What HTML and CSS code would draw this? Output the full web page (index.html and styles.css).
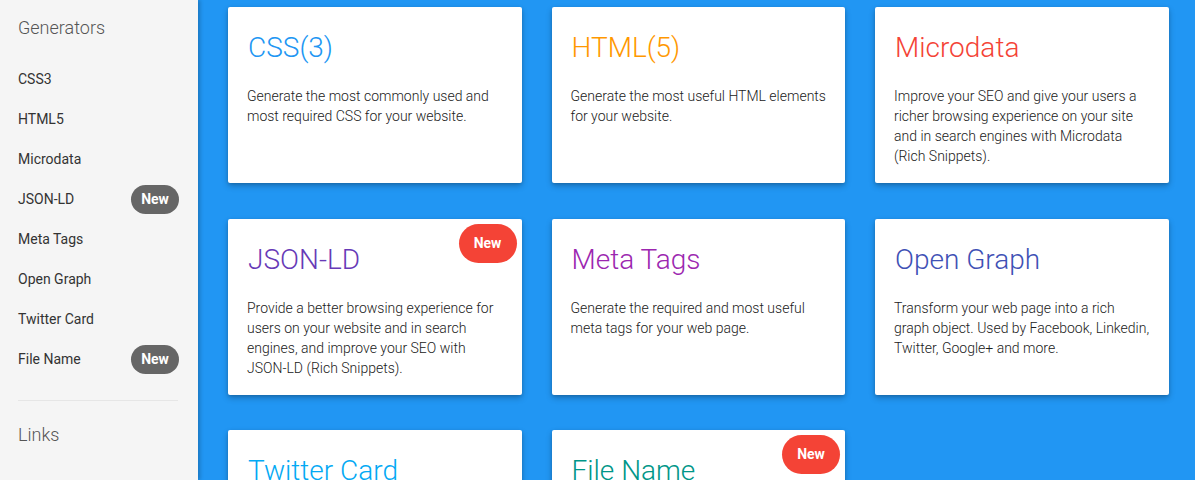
FILE: index.html
```html
<!DOCTYPE html>
<html lang="en">
<head>
<meta charset="utf-8">
<title>Generators</title>
<link rel="stylesheet" href="styles.css">
</head>
<body>
<div class="layout">
  <aside class="sidebar">
    <h2 class="side-heading">Generators</h2>
    <ul class="side-list">
      <li class="side-item"><span>CSS3</span></li>
      <li class="side-item"><span>HTML5</span></li>
      <li class="side-item"><span>Microdata</span></li>
      <li class="side-item"><span>JSON-LD</span><span class="side-badge">New</span></li>
      <li class="side-item"><span>Meta Tags</span></li>
      <li class="side-item"><span>Open Graph</span></li>
      <li class="side-item"><span>Twitter Card</span></li>
      <li class="side-item"><span>File Name</span><span class="side-badge">New</span></li>
    </ul>
    <hr class="side-divider">
    <h2 class="side-heading links">Links</h2>
  </aside>
  <main class="main">
    <div class="grid">
      <div class="card">
        <h3 class="card-title t-blue">CSS(3)</h3>
        <p class="card-text">Generate the most commonly used and<br>most required CSS for your website.</p>
      </div>
      <div class="card">
        <h3 class="card-title t-orange">HTML(5)</h3>
        <p class="card-text">Generate the most useful HTML elements<br>for your website.</p>
      </div>
      <div class="card">
        <h3 class="card-title t-red">Microdata</h3>
        <p class="card-text">Improve your SEO and give your users a<br>richer browsing experience on your site<br>and in search engines with Microdata<br>(Rich Snippets).</p>
      </div>
      <div class="card">
        <span class="card-badge">New</span>
        <h3 class="card-title t-deeppurple">JSON-LD</h3>
        <p class="card-text">Provide a better browsing experience for<br>users on your website and in search<br>engines, and improve your SEO with<br>JSON-LD (Rich Snippets).</p>
      </div>
      <div class="card">
        <h3 class="card-title t-purple">Meta Tags</h3>
        <p class="card-text">Generate the required and most useful<br>meta tags for your web page.</p>
      </div>
      <div class="card">
        <h3 class="card-title t-indigo">Open Graph</h3>
        <p class="card-text">Transform your web page into a rich<br>graph object. Used by Facebook, Linkedin,<br>Twitter, Google+ and more.</p>
      </div>
      <div class="card">
        <h3 class="card-title t-lightblue">Twitter Card</h3>
        <p class="card-text">Generate the required meta tags for<br>Twitter Cards.</p>
      </div>
      <div class="card">
        <span class="card-badge">New</span>
        <h3 class="card-title t-teal">File Name</h3>
        <p class="card-text">Generate a clean file name.</p>
      </div>
    </div>
  </main>
</div>
</body>
</html>
```
FILE: styles.css
```css
html, body {
  margin: 0;
  padding: 0;
  height: 100%;
  overflow: hidden;
}
body {
  font-family: Roboto, "Noto Sans", "Liberation Sans", sans-serif;
  background: #2196f3;
  color: #212121;
}
.layout {
  display: flex;
  height: 100%;
}
.sidebar {
  width: 198px;
  flex: 0 0 198px;
  box-sizing: border-box;
  background: #f5f5f5;
  padding: 16px 19px 0 18px;
  box-shadow: 2px 0 4px rgba(0, 0, 0, 0.22);
  position: relative;
  z-index: 1;
}
.side-heading {
  margin: 0 0 19px;
  font-size: 18px;
  line-height: 24px;
  font-weight: 300;
  color: #555;
}
.side-heading.links {
  margin: 22px 0 0;
}
.side-list {
  list-style: none;
  margin: 0;
  padding: 0;
}
.side-item {
  height: 40px;
  display: flex;
  align-items: center;
  justify-content: space-between;
  font-size: 14px;
  line-height: 20px;
  color: #333;
}
.side-badge {
  background: #666;
  color: #fff;
  font-weight: 700;
  font-size: 14px;
  width: 48px;
  height: 29px;
  line-height: 29px;
  text-align: center;
  border-radius: 15px;
}
.side-divider {
  border: 0;
  border-top: 1px solid #e6e6e6;
  margin: 21px 1px 0 0;
  height: 0;
}
.main {
  flex: 1;
  box-sizing: border-box;
  padding: 7px 26.5px 0 30px;
}
.grid {
  display: grid;
  grid-template-columns: repeat(3, 1fr);
  column-gap: 30px;
  row-gap: 35.5px;
}
.card {
  position: relative;
  height: 176px;
  box-sizing: border-box;
  background: #fff;
  border-radius: 2px;
  padding: 23px 19px 0 19px;
  box-shadow: 0 3px 6px rgba(0, 0, 0, 0.24), 0 1px 3px rgba(0, 0, 0, 0.12);
}
.card-title {
  margin: 0 0 20px 1px;
  font-size: 28px;
  line-height: 36px;
  font-weight: 300;
}
.card-text {
  margin: 0;
  font-size: 14px;
  line-height: 20px;
  font-weight: 300;
  color: #212121;
}
.card-badge {
  position: absolute;
  top: 5px;
  right: 5px;
  width: 58px;
  height: 39px;
  line-height: 39px;
  border-radius: 20px;
  background: #f44336;
  color: #fff;
  font-weight: 700;
  font-size: 14px;
  text-align: center;
}
.t-blue { color: #2196f3; }
.t-orange { color: #ff9800; }
.t-red { color: #f44336; }
.t-deeppurple { color: #673ab7; }
.t-purple { color: #9c27b0; }
.t-indigo { color: #3f51b5; }
.t-lightblue { color: #03a9f4; }
.t-teal { color: #009688; }
```
